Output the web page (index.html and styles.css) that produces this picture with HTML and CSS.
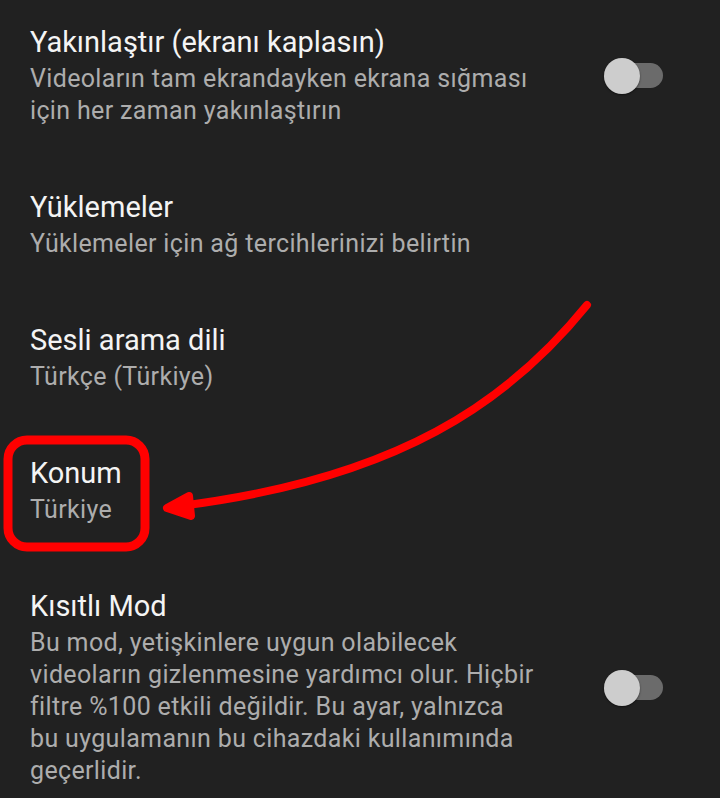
FILE: index.html
```html
<!DOCTYPE html>
<html lang="tr">
<head>
<meta charset="utf-8">
<title>Ayarlar</title>
<link rel="stylesheet" href="styles.css">
</head>
<body>
<div class="screen">
  <ul class="settings">
    <li class="item item-first">
      <div class="text">
        <div class="title">Yakınlaştır (ekranı kaplasın)</div>
        <div class="sub">Videoların tam ekrandayken ekrana sığması<br>için her zaman yakınlaştırın</div>
      </div>
      <div class="switch"><span class="track"></span><span class="thumb"></span></div>
    </li>
    <li class="item">
      <div class="text">
        <div class="title">Yüklemeler</div>
        <div class="sub">Yüklemeler için ağ tercihlerinizi belirtin</div>
      </div>
    </li>
    <li class="item">
      <div class="text">
        <div class="title">Sesli arama dili</div>
        <div class="sub">Türkçe (Türkiye)</div>
      </div>
    </li>
    <li class="item">
      <div class="text">
        <div class="title">Konum</div>
        <div class="sub">Türkiye</div>
      </div>
    </li>
    <li class="item">
      <div class="text">
        <div class="title">Kısıtlı Mod</div>
        <div class="sub">Bu mod, yetişkinlere uygun olabilecek<br>videoların gizlenmesine yardımcı olur. Hiçbir<br>filtre %100 etkili değildir. Bu ayar, yalnızca<br>bu uygulamanın bu cihazdaki kullanımında<br>geçerlidir.</div>
      </div>
      <div class="switch"><span class="track"></span><span class="thumb"></span></div>
    </li>
  </ul>
  <svg class="annotation" width="720" height="798" viewBox="0 0 720 798" aria-hidden="true">
    <rect x="8" y="440" width="137" height="107" rx="19" ry="19" fill="none" stroke="#ff0000" stroke-width="9"/>
    <path d="M587 305 C510 400, 400 480, 172 507" fill="none" stroke="#ff0000" stroke-width="8" stroke-linecap="round"/>
    <polygon points="189,496 167,508 191,516" fill="#ff0000" stroke="#ff0000" stroke-width="8" stroke-linejoin="round"/>
  </svg>
</div>
</body>
</html>
```

FILE: styles.css
```css
* { box-sizing: border-box; }
html, body {
  margin: 0;
  padding: 0;
  background: #212121;
}
.screen {
  position: relative;
  width: 720px;
  height: 798px;
  overflow: hidden;
  background: #212121;
  font-family: Roboto, "Noto Sans", sans-serif;
}
.settings {
  list-style: none;
  margin: 0;
  padding: 0;
}
.item {
  display: flex;
  align-items: center;
  justify-content: space-between;
  padding: 31px 57px 31px 30px;
}
.item-first {
  padding-top: 24px;
}
.title {
  color: #f4f4f4;
  font-size: 29px;
  line-height: 36px;
}
.sub {
  color: #adadad;
  font-size: 25px;
  line-height: 32px;
  letter-spacing: 0.35px;
  margin-top: 3px;
}
.switch {
  position: relative;
  width: 59px;
  height: 36px;
  flex: none;
}
.track {
  position: absolute;
  left: 0;
  right: 0;
  top: 5px;
  height: 25px;
  border-radius: 13px;
  background: #6b6b6b;
}
.thumb {
  position: absolute;
  left: 0;
  top: 0;
  width: 36px;
  height: 36px;
  border-radius: 50%;
  background: #cdcdcd;
  box-shadow: 0 1px 2px rgba(0,0,0,0.5);
}
.annotation {
  position: absolute;
  left: 0;
  top: 0;
  pointer-events: none;
}
```
